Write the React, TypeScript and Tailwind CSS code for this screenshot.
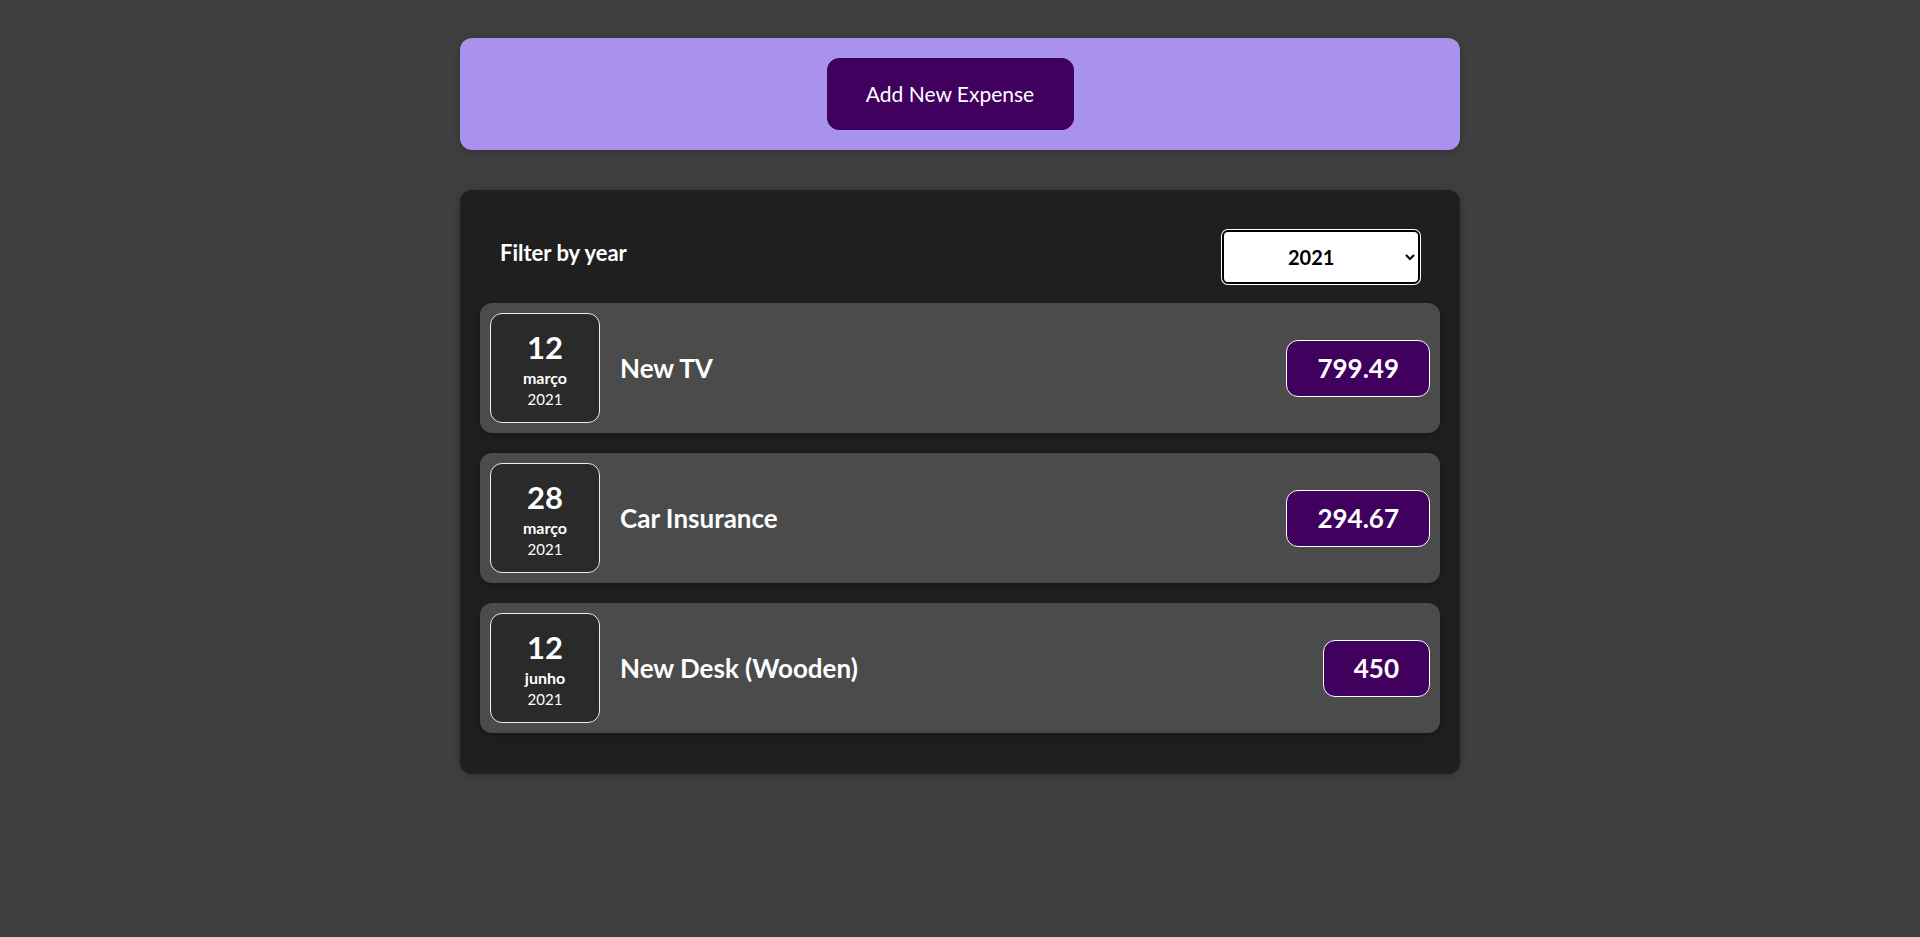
import React, { useState } from "react";

type Expense = {
  id: string;
  title: string;
  amount: string;
  day: string;
  month: string;
  year: string;
};

const expenses: Expense[] = [
  { id: "e1", title: "New TV", amount: "799.49", day: "12", month: "março", year: "2021" },
  { id: "e2", title: "Car Insurance", amount: "294.67", day: "28", month: "março", year: "2021" },
  { id: "e3", title: "New Desk (Wooden)", amount: "450", day: "12", month: "junho", year: "2021" },
];

const ExpenseDate = ({ day, month, year }: { day: string; month: string; year: string }) => (
  <div className="flex h-[110px] w-[110px] shrink-0 flex-col items-center justify-center rounded-xl border border-[#ececec] bg-[#2a2a2a] text-white">
    <div className="text-[31px] font-bold leading-[40px]">{day}</div>
    <div className="text-[16px] font-bold leading-[22px]">{month}</div>
    <div className="text-[15px] leading-[20px]">{year}</div>
  </div>
);

const ExpenseItem = (props: Expense) => (
  <li className="flex items-center rounded-xl bg-[#4b4b4b] p-[10px] shadow-[0_2px_8px_rgba(0,0,0,0.25)]">
    <ExpenseDate day={props.day} month={props.month} year={props.year} />
    <h2 className="mx-5 flex-1 text-[26px] font-bold text-white">{props.title}</h2>
    <div className="flex h-[57px] items-center rounded-xl border border-white bg-[#40005d] px-[30px] text-[26px] font-bold text-white">
      {props.amount}
    </div>
  </li>
);

const App = () => {
  const [year, setYear] = useState("2021");

  return (
    <div className="min-h-screen bg-[#3f3f3f] pt-[38px] pb-10 font-['Lato','Noto_Sans',sans-serif]">
      {/* New expense */}
      <div className="mx-auto w-[1000px] rounded-xl bg-[#a892ee] p-5 text-center shadow-[0_1px_8px_rgba(0,0,0,0.25)]">
        <button className="mr-5 h-[72px] w-[247px] rounded-xl border border-[#40005d] bg-[#40005d] text-[21px] text-white">
          Add New Expense
        </button>
      </div>

      {/* Expenses */}
      <div className="mx-auto mt-10 w-[1000px] rounded-xl bg-[#1f1f1f] p-5 shadow-[0_1px_8px_rgba(0,0,0,0.25)]">
        <div className="mt-5 flex items-center justify-between px-5">
          <label className="mb-[10px] text-[22px] font-bold text-white">Filter by year</label>
          <select
            value={year}
            onChange={(e) => setYear(e.target.value)}
            className="h-[54px] w-[198px] rounded-md border-2 border-black bg-white pl-[60px] text-xl font-bold text-black ring-1 ring-white"
          >
            <option value="2022">2022</option>
            <option value="2021">2021</option>
            <option value="2020">2020</option>
            <option value="2019">2019</option>
          </select>
        </div>
        <ul className="mt-[19px] mb-[21px] flex flex-col gap-5">
          {expenses.map((item) => (
            <ExpenseItem key={item.id} {...item} />
          ))}
        </ul>
      </div>
    </div>
  );
};

export default App;
